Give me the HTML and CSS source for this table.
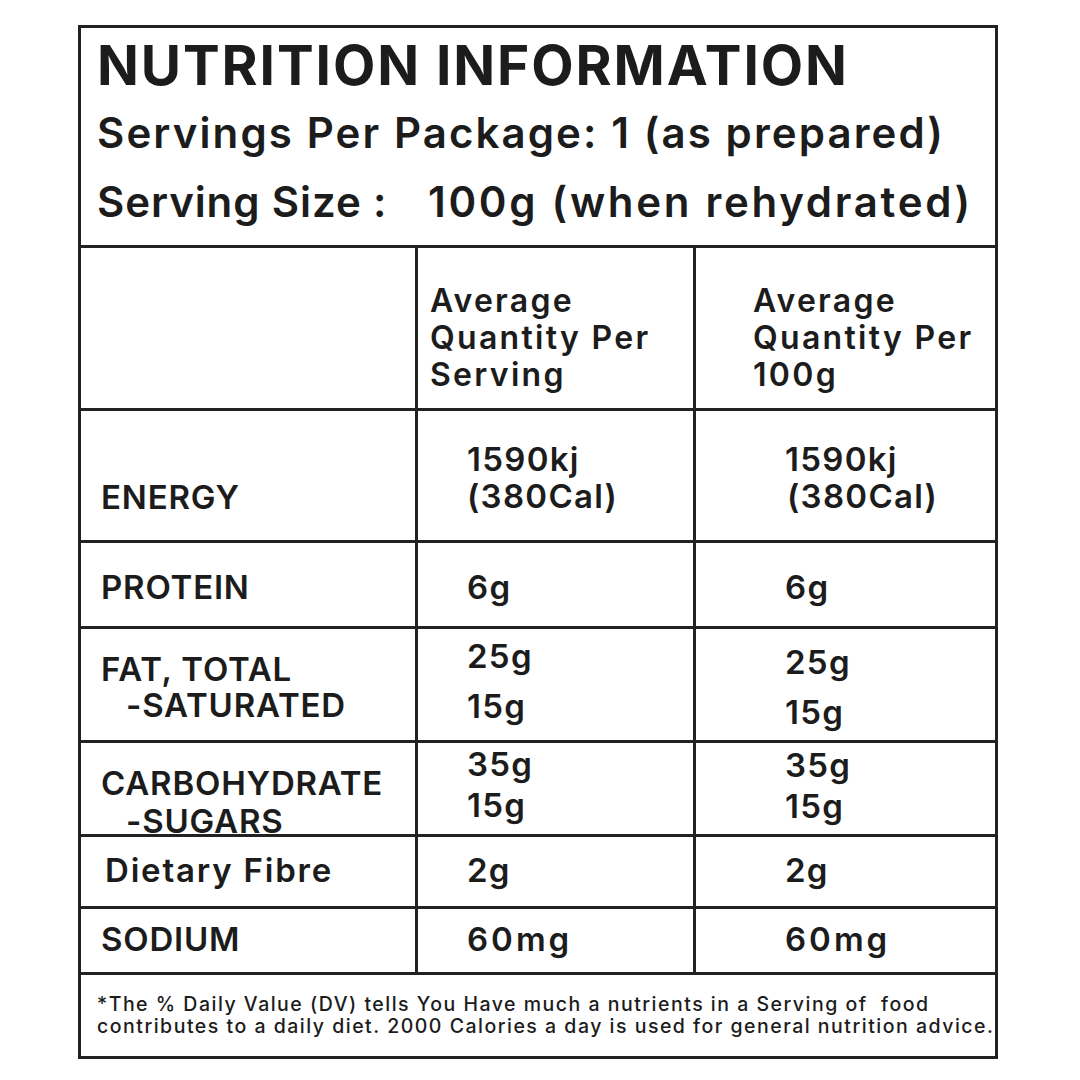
FILE: index.html
```html
<!DOCTYPE html>
<html>
<head>
<meta charset="utf-8">
<link rel="stylesheet" href="styles.css">
</head>
<body>
<div class="label">
  <div class="head">
    <div class="title">NUTRITION INFORMATION</div>
    <div class="sub-line l2">Servings Per Package: 1 (as prepared)</div>
    <div class="sub-line l3"><span class="size-key">Serving Size :</span><span class="size-val">100g (when rehydrated)</span></div>
  </div>
  <div class="grid">
    <div class="cell c1 r-head"></div>
    <div class="cell c2 r-head hdr"><div>Average</div><div>Quantity Per</div><div>Serving</div></div>
    <div class="cell c3 r-head hdr"><div>Average</div><div>Quantity Per</div><div>100g</div></div>

    <div class="cell c1 r-energy"><div>ENERGY</div></div>
    <div class="cell c2 r-energy v"><div>1590kj</div><div>(380Cal)</div></div>
    <div class="cell c3 r-energy v"><div>1590kj</div><div class="shift">(380Cal)</div></div>

    <div class="cell c1 r-protein"><div>PROTEIN</div></div>
    <div class="cell c2 r-protein v"><div>6g</div></div>
    <div class="cell c3 r-protein v"><div>6g</div></div>

    <div class="cell c1 r-fat"><div>FAT, TOTAL</div><div class="indent">-SATURATED</div></div>
    <div class="cell c2 r-fat v"><div>25g</div><div>15g</div></div>
    <div class="cell c3 r-fat v"><div>25g</div><div>15g</div></div>

    <div class="cell c1 r-carb"><div>CARBOHYDRATE</div><div class="indent">-SUGARS</div></div>
    <div class="cell c2 r-carb v"><div>35g</div><div>15g</div></div>
    <div class="cell c3 r-carb v"><div>35g</div><div>15g</div></div>

    <div class="cell c1 r-fibre fibre"><div>Dietary Fibre</div></div>
    <div class="cell c2 r-fibre v"><div>2g</div></div>
    <div class="cell c3 r-fibre v"><div>2g</div></div>

    <div class="cell c1 r-sodium"><div>SODIUM</div></div>
    <div class="cell c2 r-sodium v mg"><div>60mg</div></div>
    <div class="cell c3 r-sodium v mg"><div>60mg</div></div>
  </div>
  <div class="foot">
    <div>*The % Daily Value (DV) tells You Have much a nutrients in a Serving of&nbsp; food</div>
    <div>contributes to a daily diet. 2000 Calories a day is used for general nutrition advice.</div>
  </div>
</div>
</body>
</html>
```

FILE: styles.css
```css
html, body {
  margin: 0;
  padding: 0;
  background: #ffffff;
}
body {
  font-family: "Inter", "Open Sans", "Liberation Sans", sans-serif;
  color: #1c1c1c;
}
.label {
  box-sizing: border-box;
  width: 920px;
  height: 1034px;
  margin: 25px 0 0 78px;
  border: 3px solid #222222;
  display: flex;
  flex-direction: column;
}
.head {
  box-sizing: border-box;
  height: 220px;
  border-bottom: 3px solid #222222;
  padding: 7px 0 0 16px;
}
.title {
  font-size: 55px;
  line-height: 60px;
  font-weight: 700;
  letter-spacing: 1.9px;
}
.sub-line {
  font-size: 42px;
  line-height: 50px;
  font-weight: 600;
  white-space: nowrap;
}
.l2 {
  margin-top: 13px;
  letter-spacing: 2.1px;
}
.l3 {
  margin-top: 19px;
}
.size-key {
  display: inline-block;
  width: 331px;
  letter-spacing: 0.9px;
}
.size-val {
  letter-spacing: 2.7px;
}
.grid {
  display: grid;
  grid-template-columns: 337px 278px 299px;
  grid-template-rows: 163px 132px 86px 114px 94px 72px 66px;
}
.cell {
  box-sizing: border-box;
  border-bottom: 3px solid #222222;
  font-size: 33px;
  line-height: 37px;
  font-weight: 600;
  white-space: nowrap;
  display: flex;
  flex-direction: column;
}
.c1 {
  border-right: 3px solid #222222;
  padding-left: 20px;
  letter-spacing: 0.8px;
}
.c2 {
  border-right: 3px solid #222222;
  padding-left: 49px;
}
.c3 {
  padding-left: 89px;
}
.v {
  letter-spacing: 1.3px;
}
.mg {
  letter-spacing: 3px;
}
.hdr {
  font-size: 32px;
  letter-spacing: 2.3px;
}
.c2.hdr {
  padding-left: 12px;
}
.c3.hdr {
  padding-left: 57px;
}
.indent {
  padding-left: 25px;
}
.c1.fibre {
  padding-left: 24px;
  letter-spacing: 1.8px;
}
.shift {
  margin-left: 2px;
}
.r-head { padding-top: 34px; }
.r-energy { padding-top: 30px; }
.c1.r-energy { padding-top: 68px; }
.r-protein { padding-top: 26px; }
.c1.r-fat { padding-top: 22px; line-height: 36px; }
.c2.r-fat { padding-top: 9px; gap: 13px; }
.c3.r-fat { padding-top: 15px; gap: 13px; }
.c1.r-carb { padding-top: 21px; line-height: 38px; }
.c2.r-carb { padding-top: 3px; gap: 4px; }
.c3.r-carb { padding-top: 4px; gap: 4px; }
.r-fibre { padding-top: 15px; }
.r-sodium { padding-top: 12px; }
.foot {
  flex: 1;
  padding: 18px 0 0 16px;
  font-size: 19.5px;
  line-height: 22px;
  font-weight: 500;
  letter-spacing: 1.5px;
  white-space: nowrap;
}
```
